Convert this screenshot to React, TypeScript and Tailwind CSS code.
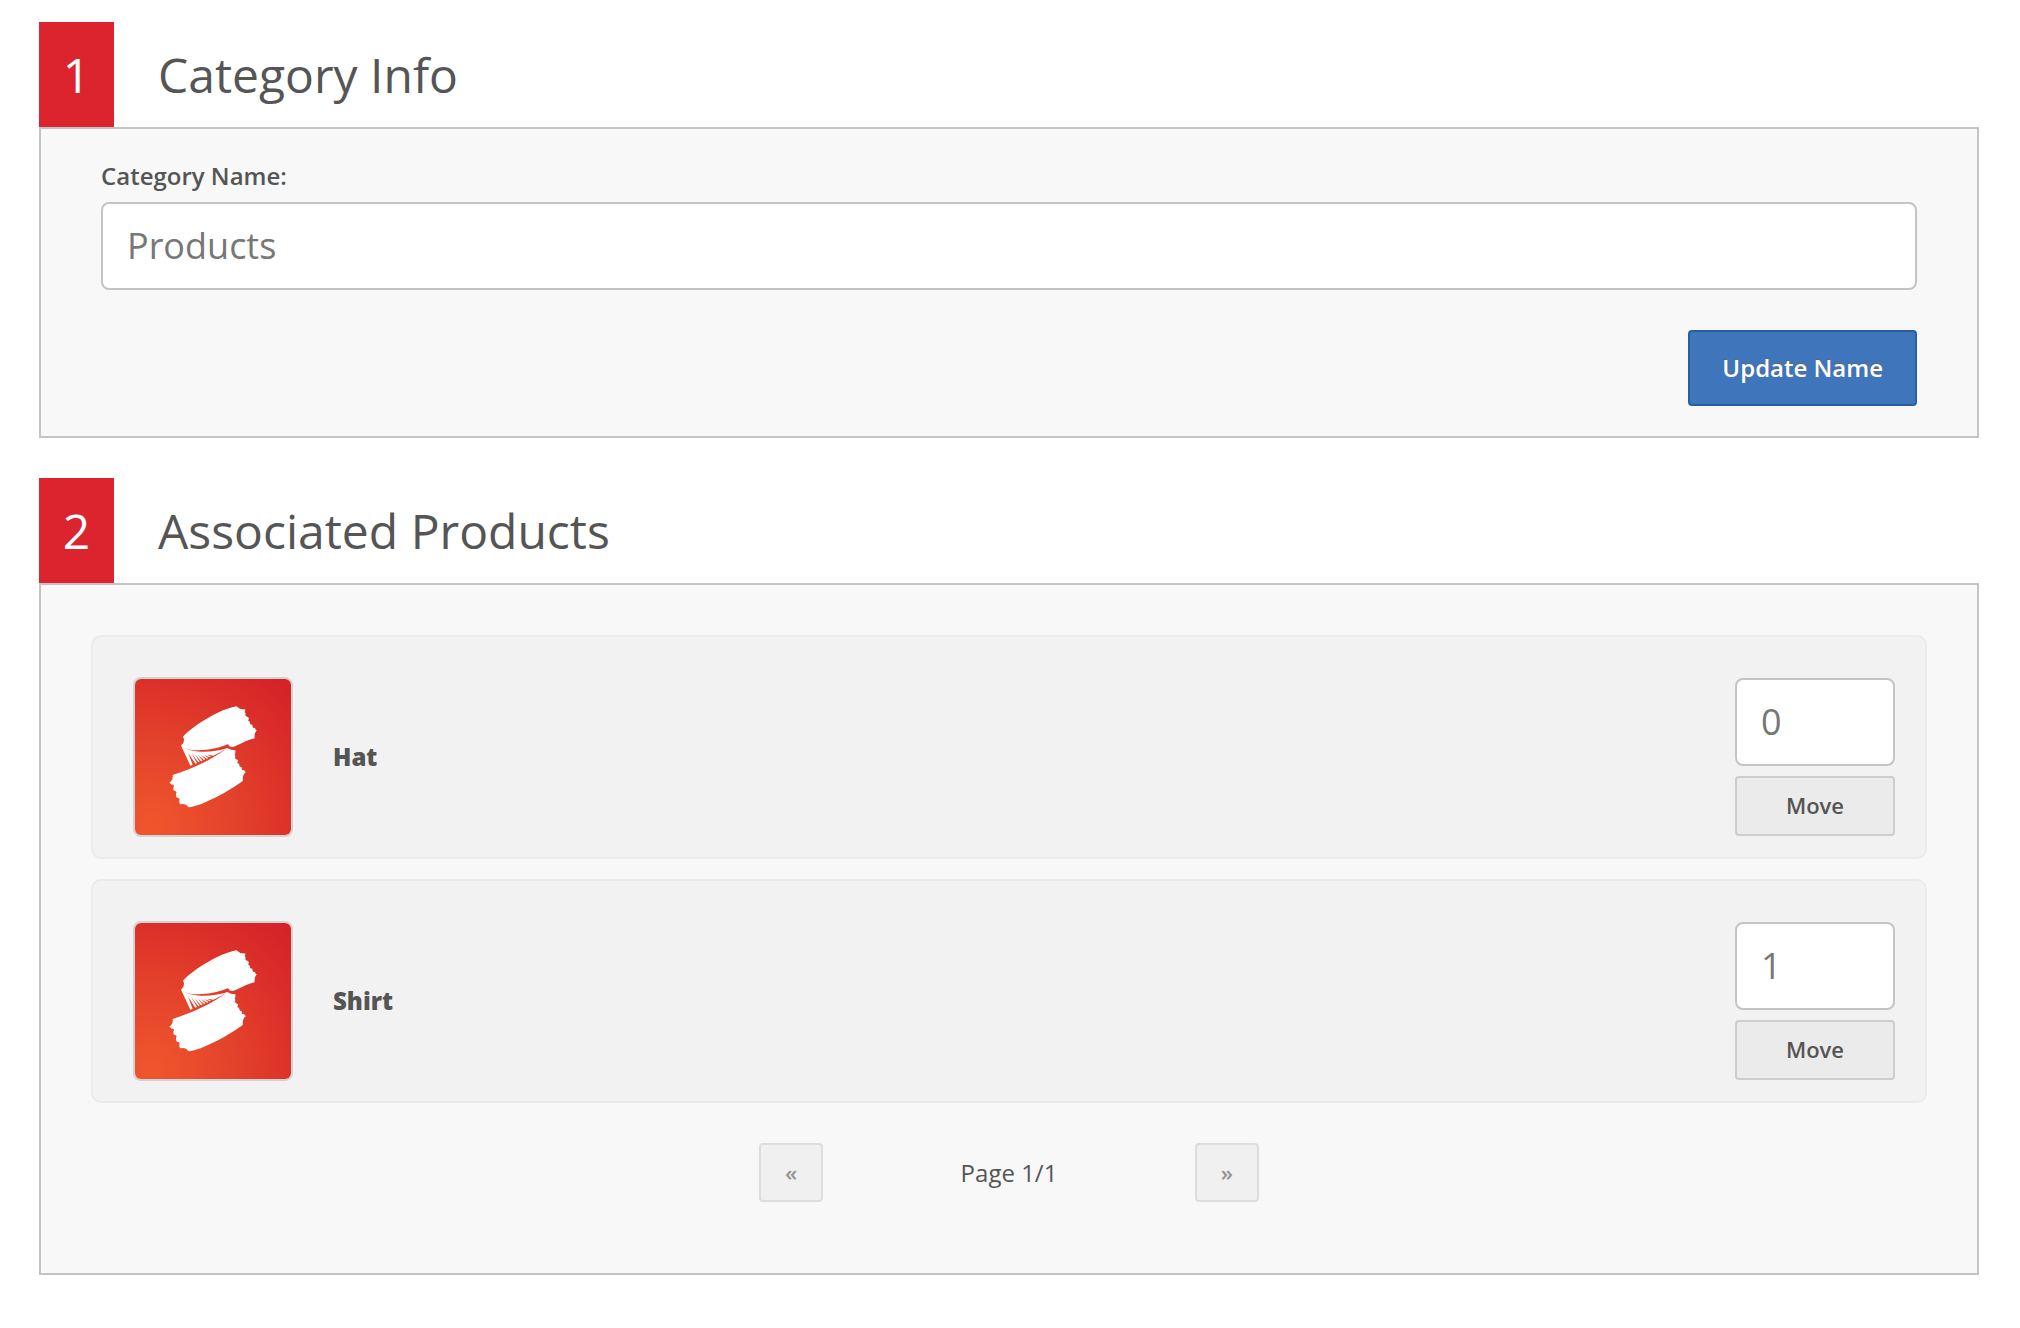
import type { ReactNode } from "react";

const products = [
    { name: "Hat", position: 0 },
    { name: "Shirt", position: 1 },
];

function TicketLogo({ id }: { id: string }) {
    return (
        <svg viewBox="45 42 468 468" className="block w-full" aria-hidden="true">
            <defs>
                <radialGradient id={id} gradientUnits="userSpaceOnUse" cx="92" cy="485" r="590">
                    <stop offset="0" stopColor="#f0562d" />
                    <stop offset="0.45" stopColor="#e3412b" />
                    <stop offset="0.75" stopColor="#db2f29" />
                    <stop offset="1" stopColor="#d52228" />
                </radialGradient>
            </defs>
            <rect x="45" y="42" width="468" height="468" fill={`url(#${id})`} />
            <g fill="#fff">
                <path d="M349 124C299 133 223 180 190 214Q189 218 192 222Q193 234 185 239L183 243C200 259 262 263 323 238Q328 239 328 244Q336 248 345 244C365 235 382 225 404 220Q402 206 410 196Q405 194 405 188Q399 191 397 184Q399 178 393 179Q388 175 390 169Q382 170 386 163Q387 159 384 156Q375 155 376 149Q378 144 374 142Q377 136 375 133Q360 135 349 124Z" />
                <path d="M321 249C276 286 207 314 158 330Q160 345 148 353Q154 355 153 359Q159 357 162 362Q158 373 162 377Q169 378 170 382Q165 392 171 398Q179 398 179 404Q176 413 181 418Q196 413 206 427C245 423 328 378 369 347Q366 330 378 321Q373 320 372 314Q365 317 365 311Q367 305 362 306Q356 303 358 296Q350 297 353 290Q356 286 352 284Q344 283 345 276Q348 273 344 270Q347 262 346 256Q333 256 321 249Z" />
                <path d="M184 244L211 302L218 299L204 263L226 296L231 294L214 265L235 292L239 290L224 267L243 289L248 287L234 269L252 285L256 283L243 270L261 281L265 279L252 270L269 277L273 275L262 269L280 272Q302 263 321 250C275 264 219 266 184 244Z" />
            </g>
        </svg>
    );
}

function Section({ step, title, children }: { step: number; title: string; children: ReactNode }) {
    return (
        <section>
            <div className="flex items-stretch">
                <span className="flex w-[75px] items-center justify-center bg-[#dc242e] text-5xl text-white">
                    {step}
                </span>
                <h2 className="ml-11 py-[18px] text-5xl leading-[69px]">{title}</h2>
            </div>
            <div className="border-2 border-[#c4c4c4] bg-[#f8f8f8]">{children}</div>
        </section>
    );
}

function ProductRow({ name, position }: { name: string; position: number }) {
    const inputId = `position-${position}`;

    return (
        <li className="flex items-center rounded-[10px] border-2 border-[#ebebeb] bg-[#f2f2f2] pt-10 pr-[30px] pb-5 pl-10">
            <div className="w-40 overflow-hidden rounded-lg border-2 border-[#d3d3d3]">
                <TicketLogo id={`logo-${position}`} />
            </div>
            <label htmlFor={inputId} className="ml-10 flex-1 text-2xl font-extrabold">
                {name}
            </label>
            <div className="flex w-40 flex-col gap-[10px]">
                <input
                    id={inputId}
                    type="text"
                    defaultValue={position}
                    className="h-[88px] w-full rounded-lg border-2 border-[#c4c4c4] bg-white px-6 pb-0.5 text-4xl text-[#777]"
                />
                <button
                    type="button"
                    className="h-[60px] rounded border-2 border-[#cdcdcd] bg-[#ebebeb] pb-0.5 text-[22px] font-semibold"
                >
                    Move
                </button>
            </div>
        </li>
    );
}

export default function App() {
    return (
        <main className="flex min-h-screen flex-col gap-10 bg-white pt-[22px] pr-[41px] pb-[53px] pl-[39px] font-['Open_Sans',sans-serif] text-[#555]">
            <Section step={1} title="Category Info">
                <form className="flex flex-col px-[60px] py-[30px]">
                    <label htmlFor="category-name" className="text-2xl leading-[33px] font-semibold">
                        Category Name:
                    </label>
                    <input
                        id="category-name"
                        type="text"
                        defaultValue="Products"
                        className="mt-[10px] h-[88px] w-full rounded-lg border-2 border-[#c4c4c4] bg-white px-6 pb-0.5 text-4xl text-[#777]"
                    />
                    <button
                        type="button"
                        className="mt-10 h-[76px] self-end rounded border-2 border-[#275fa3] bg-[#3f75ba] px-8 text-2xl font-semibold text-white [text-shadow:0_-1px_0_#666]"
                    >
                        Update Name
                    </button>
                </form>
            </Section>

            <Section step={2} title="Associated Products">
                <div className="px-[50px] pt-[50px] pb-[71px]">
                    <ul className="flex flex-col gap-5">
                        {products.map((product) => (
                            <ProductRow key={product.name} {...product} />
                        ))}
                    </ul>
                    <nav className="mx-auto mt-10 flex w-[500px] items-center justify-between text-2xl">
                        <button
                            type="button"
                            disabled
                            aria-label="Previous page"
                            className="h-[59px] w-16 rounded border-2 border-[#dddddd] bg-[#f0f0f0] text-[22px] font-semibold text-[#939393]"
                        >
                            «
                        </button>
                        <span>Page 1/1</span>
                        <button
                            type="button"
                            disabled
                            aria-label="Next page"
                            className="h-[59px] w-16 rounded border-2 border-[#dddddd] bg-[#f0f0f0] text-[22px] font-semibold text-[#939393]"
                        >
                            »
                        </button>
                    </nav>
                </div>
            </Section>
        </main>
    );
}
